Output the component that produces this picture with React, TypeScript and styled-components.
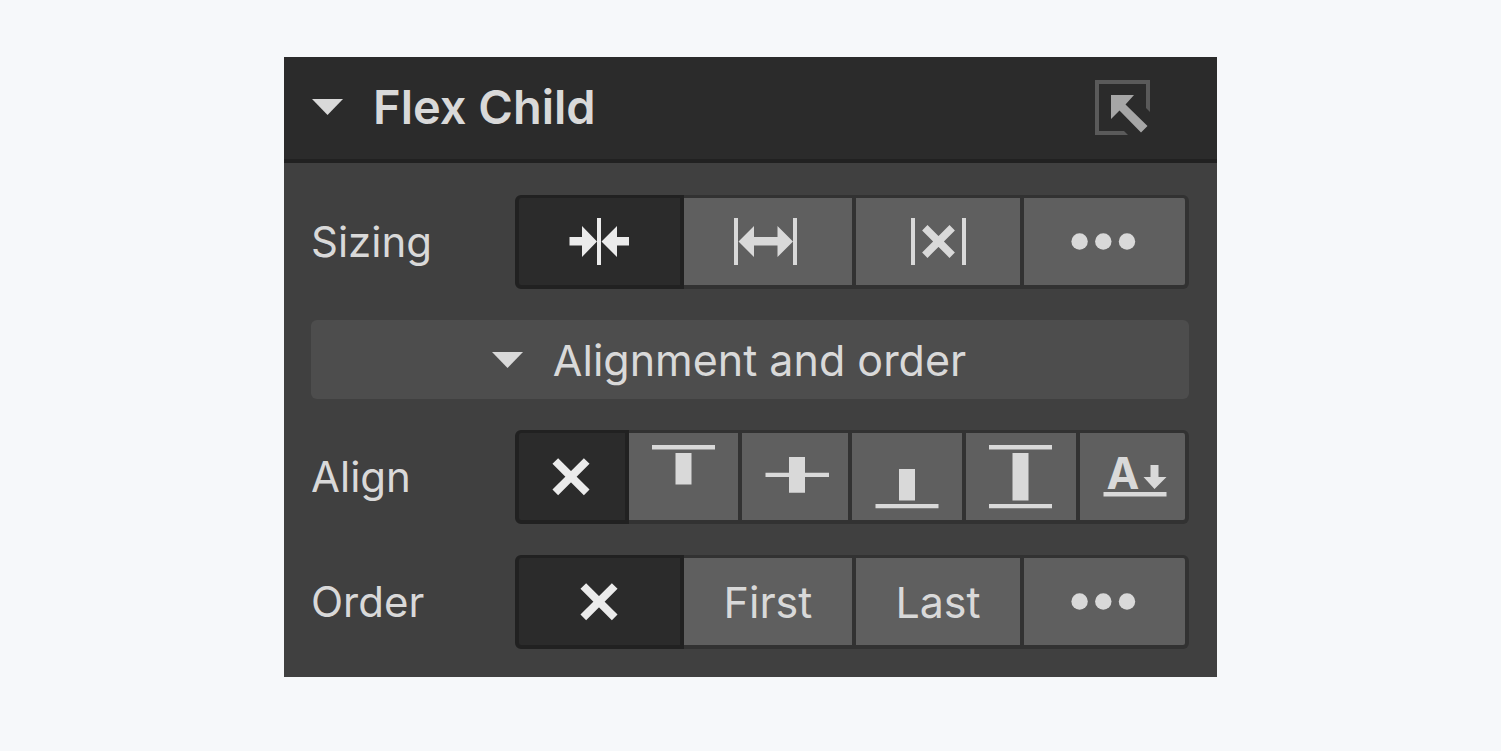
import React, { useState } from "react";
import styled, { createGlobalStyle, css } from "styled-components";

const color = {
  page: "#f6f8fa",
  header: "#2b2b2b",
  headerLine: "#212121",
  body: "#404040",
  bar: "#4d4d4d",
  button: "#5f5f5f",
  line: "#323232",
  text: "#d9d9d9",
  active: "#ebebeb",
};

const GlobalStyle = createGlobalStyle`
  *, *::before, *::after { box-sizing: border-box; }
  body {
    margin: 0;
    background: ${color.page};
    color: ${color.text};
    font-family: Inter, "Liberation Sans", sans-serif;
  }
  button {
    margin: 0;
    border: 0;
    padding: 0;
    background: none;
    color: inherit;
    font: inherit;
    cursor: pointer;
  }
  svg { display: block; flex: none; fill: currentColor; }
`;

const Page = styled.main`
  display: flex;
  justify-content: center;
  padding: 57px 24px;
`;

const Panel = styled.section`
  width: 100%;
  max-width: 933px;
  background: ${color.body};
`;

const Header = styled.header`
  display: flex;
  align-items: center;
  justify-content: space-between;
  height: 106px;
  padding: 0 67px 2px 28px;
  background: ${color.header};
  border-bottom: 4px solid ${color.headerLine};
`;

const Title = styled.h2`
  margin: 0;
  font-size: 47px;
  line-height: 56px;
  font-weight: 600;
`;

const TitleToggle = styled.button`
  display: flex;
  align-items: center;
  gap: 30px;
`;

const Body = styled.div`
  display: flex;
  flex-direction: column;
  gap: 31px;
  padding: 32px 28px 28px 27px;
`;

const Row = styled.div`
  display: flex;
  align-items: center;
`;

const Label = styled.span`
  flex: none;
  width: 204px;
  font-size: 42px;
  line-height: 52px;
`;

const Segments = styled.div<{ $columns: string }>`
  flex: 1;
  display: grid;
  grid-template-columns: ${(p) => p.$columns};
  height: 94px;
`;

const Segment = styled.button<{ $active: boolean }>`
  display: flex;
  align-items: center;
  justify-content: center;
  min-width: 0;
  font-size: 43px;
  line-height: 52px;
  background: ${color.button};
  border: solid ${color.line};
  border-width: 3px 4px 4px 0;

  &:first-child {
    border-left-width: 4px;
    border-radius: 6px 0 0 6px;
  }
  &:last-child {
    border-radius: 0 6px 6px 0;
  }
  ${(p) =>
    p.$active &&
    css`
      color: ${color.active};
      background: ${color.header};
      border-color: ${color.headerLine};
    `}
`;

const Disclosure = styled.button`
  display: flex;
  align-items: center;
  justify-content: center;
  gap: 30px;
  height: 79px;
  padding-right: 42px;
  border-radius: 6px;
  background: ${color.bar};
  font-size: 43px;
  line-height: 52px;
`;

const Caret = () => (
  <svg width="31" height="16" viewBox="0 0 31 16" aria-hidden="true">
    <path d="M0 0H31L15.5 16Z" />
  </svg>
);

const SelectParentIcon = () => (
  <svg width="55" height="55" viewBox="0 0 55 55" aria-hidden="true">
    <path fill="#5a5a5a" d="M0 0H55V32L51 28V4H4V51H29L33 55H0Z" />
    <path fill="#a6a6a6" d="M16 15H39L30.5 24.5L52.5 46L46 52.5L24.5 30.5L16 39Z" />
  </svg>
);

const Glyph = ({ children }: { children: React.ReactNode }) => (
  <svg width="80" height="81" viewBox="0 0 80 81" aria-hidden="true">
    {children}
  </svg>
);

const ShrinkIcon = () => (
  <Glyph>
    <path d="M9.5 36H22V25L37 40.5L22 56V44.5H9.5Z" />
    <path d="M37 17H41V64H37Z" />
    <path d="M69 36H57V25L41.5 40.5L57 56V44.5H69Z" />
  </Glyph>
);

const GrowIcon = () => (
  <Glyph>
    <path d="M6 17H10V64H6ZM65 17H69V64H65Z" />
    <path d="M10.5 40.5L26 25V36H49.5V25L65 40.5L49.5 56V44.5H26V56Z" />
  </Glyph>
);

const FixedIcon = () => (
  <Glyph>
    <path d="M13 17H17V64H13ZM64 17H68V64H64Z" />
    <path
      d="M26.8 26.8L54.2 54.2M54.2 26.8L26.8 54.2"
      fill="none"
      stroke="currentColor"
      strokeWidth="7.6"
    />
  </Glyph>
);

const MoreIcon = () => (
  <Glyph>
    <circle cx="14.6" cy="40.5" r="8.2" />
    <circle cx="38.3" cy="40.5" r="8.2" />
    <circle cx="62" cy="40.5" r="8.2" />
  </Glyph>
);

const NoneIcon = () => (
  <Glyph>
    <path
      d="M23.3 25L54.7 56.4M54.7 25L23.3 56.4"
      fill="none"
      stroke="currentColor"
      strokeWidth="8"
    />
  </Glyph>
);

const StartIcon = () => (
  <Glyph>
    <path d="M8 9H71V13.4H8ZM31.5 17H47.5V48.5H31.5Z" />
  </Glyph>
);

const CenterIcon = () => (
  <Glyph>
    <path d="M10.5 36.8H74V41H10.5ZM34 21H50V56.7H34Z" />
  </Glyph>
);

const EndIcon = () => (
  <Glyph>
    <path d="M8.5 68H71.5V72.3H8.5ZM32 33H48V64.5H32Z" />
  </Glyph>
);

const StretchIcon = () => (
  <Glyph>
    <path d="M8 9H71V13.4H8ZM8 68H71V72.3H8ZM31.5 17H47.5V64.5H31.5Z" />
  </Glyph>
);

const BaselineIcon = () => (
  <Glyph>
    <text x="30" y="53" textAnchor="middle" fontSize="44" fontWeight="700">
      A
    </text>
    <path d="M57.5 29H65.5V41H73.5L61.5 53L50.5 41H57.5Z" />
    <path d="M10.5 56H73.5V60.5H10.5Z" />
  </Glyph>
);

type Option = { name: string; content: React.ReactNode };

const sizing: Option[] = [
  { name: "Shrink if needed", content: <ShrinkIcon /> },
  { name: "Grow if possible", content: <GrowIcon /> },
  { name: "Don't shrink or grow", content: <FixedIcon /> },
  { name: "More sizing options", content: <MoreIcon /> },
];

const align: Option[] = [
  { name: "Auto", content: <NoneIcon /> },
  { name: "Start", content: <StartIcon /> },
  { name: "Center", content: <CenterIcon /> },
  { name: "End", content: <EndIcon /> },
  { name: "Stretch", content: <StretchIcon /> },
  { name: "Baseline", content: <BaselineIcon /> },
];

const order: Option[] = [
  { name: "Default", content: <NoneIcon /> },
  { name: "First", content: "First" },
  { name: "Last", content: "Last" },
  { name: "More order options", content: <MoreIcon /> },
];

const FOUR = "169fr 172fr 168fr 165fr";
const SIX = "114fr 113fr 110fr 114fr 114fr 109fr";

function Control({ label, options, columns }: { label: string; options: Option[]; columns: string }) {
  const [selected, setSelected] = useState(0);
  const id = `label-${label.toLowerCase()}`;
  return (
    <Row role="group" aria-labelledby={id}>
      <Label id={id}>{label}</Label>
      <Segments $columns={columns}>
        {options.map((option, i) => (
          <Segment
            key={option.name}
            type="button"
            aria-label={option.name}
            aria-pressed={i === selected}
            $active={i === selected}
            onClick={() => setSelected(i)}
          >
            {option.content}
          </Segment>
        ))}
      </Segments>
    </Row>
  );
}

export default function App() {
  const [open, setOpen] = useState(true);
  const [details, setDetails] = useState(true);
  return (
    <>
      <GlobalStyle />
      <Page>
        <Panel>
          <Header>
            <Title>
              <TitleToggle type="button" aria-expanded={open} onClick={() => setOpen(!open)}>
                <Caret />
                Flex Child
              </TitleToggle>
            </Title>
            <button type="button" aria-label="Select parent">
              <SelectParentIcon />
            </button>
          </Header>
          {open && (
            <Body>
              <Control label="Sizing" options={sizing} columns={FOUR} />
              <Disclosure type="button" aria-expanded={details} onClick={() => setDetails(!details)}>
                <Caret />
                Alignment and order
              </Disclosure>
              {details && (
                <>
                  <Control label="Align" options={align} columns={SIX} />
                  <Control label="Order" options={order} columns={FOUR} />
                </>
              )}
            </Body>
          )}
        </Panel>
      </Page>
    </>
  );
}
